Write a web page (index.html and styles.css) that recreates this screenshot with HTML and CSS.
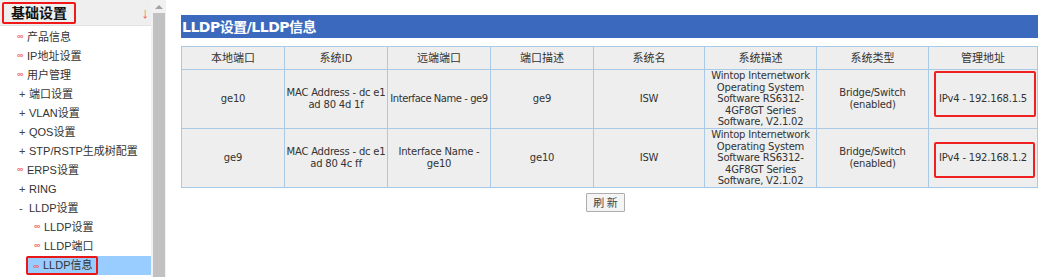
FILE: index.html
```html
<!DOCTYPE html>
<html lang="zh-CN">
  <head>
    <meta charset="UTF-8" />
    <title>LLDP信息</title>
    <link rel="stylesheet" href="styles.css">
  </head>
  <body>
    <div class="side">
      <div class="side-head">
        <span class="head-title">基础设置</span>
        <span class="arrow">↓</span>
      </div>
      <ul class="menu">
        <li class="leaf"><i class="dot">∞</i>产品信息</li>
        <li class="leaf"><i class="dot">∞</i>IP地址设置</li>
        <li class="leaf"><i class="dot">∞</i>用户管理</li>
        <li class="node"><i class="sign">+</i>端口设置</li>
        <li class="node"><i class="sign">+</i>VLAN设置</li>
        <li class="node"><i class="sign">+</i>QOS设置</li>
        <li class="node"><i class="sign">+</i>STP/RSTP生成树配置</li>
        <li class="leaf"><i class="dot">∞</i>ERPS设置</li>
        <li class="node"><i class="sign">+</i>RING</li>
        <li class="node"><i class="sign">-</i>LLDP设置</li>
        <li class="sub"><i class="dot">∞</i>LLDP设置</li>
        <li class="sub"><i class="dot">∞</i>LLDP端口</li>
        <li class="sub active"><span class="marked"><i class="dot">∞</i>LLDP信息</span></li>
      </ul>
    </div>
    <div class="scrollbar">
      <div class="up"></div>
      <div class="thumb"></div>
    </div>

    <div class="main">
      <h1 class="title">LLDP设置/LLDP信息</h1>
      <table class="info">
        <colgroup>
          <col style="width: 103px" />
          <col style="width: 103px" />
          <col style="width: 103px" />
          <col style="width: 103px" />
          <col style="width: 111px" />
          <col style="width: 112px" />
          <col style="width: 112px" />
          <col />
        </colgroup>
        <thead>
          <tr>
            <th>本地端口</th>
            <th>系统ID</th>
            <th>远端端口</th>
            <th>端口描述</th>
            <th>系统名</th>
            <th>系统描述</th>
            <th>系统类型</th>
            <th>管理地址</th>
          </tr>
        </thead>
        <tbody>
          <tr class="row-a">
            <td>ge10</td>
            <td>MAC Address - dc e1 ad 80 4d 1f</td>
            <td class="tight">Interface Name - ge9</td>
            <td>ge9</td>
            <td>ISW</td>
            <td>Wintop Internetwork Operating System Software RS6312-4GF8GT Series Software, V2.1.02</td>
            <td>Bridge/Switch (enabled)</td>
            <td class="addr"><span class="note"></span>IPv4 - 192.168.1.5</td>
          </tr>
          <tr class="row-b">
            <td>ge9</td>
            <td>MAC Address - dc e1 ad 80 4c ff</td>
            <td>Interface Name - ge10</td>
            <td>ge10</td>
            <td>ISW</td>
            <td>Wintop Internetwork Operating System Software RS6312-4GF8GT Series Software, V2.1.02</td>
            <td>Bridge/Switch (enabled)</td>
            <td class="addr"><span class="note"></span>IPv4 - 192.168.1.2</td>
          </tr>
        </tbody>
      </table>
      <div class="actions">
        <button class="btn">刷 新</button>
      </div>
    </div>
  </body>
</html>
```

FILE: styles.css
```css
body {
  margin: 0;
  display: flex;
  align-items: flex-start;
  background-color: #fff;
  color: #333;
  font-family: "Liberation Sans", "Noto Sans CJK SC", sans-serif;
  height: 277px;
  overflow: hidden;
}

/* Left menu */
.side {
  width: 151px;
  flex: none;
}

.side-head {
  height: 25px;
  background-color: #efefef;
  border-bottom: 1px solid #e2e2e2;
  display: flex;
  align-items: center;
  justify-content: space-between;
  padding: 0 2px;
}

.head-title {
  font-size: 14px;
  font-weight: bold;
  color: #111;
  border: 2px solid #f01818;
  border-radius: 2px;
  padding: 0 7px 0 7px;
  height: 18px;
  line-height: 18px;
}

.arrow {
  color: #f06060;
  font-size: 15px;
  margin-right: 0;
}

.menu {
  list-style: none;
  margin: 0;
  padding: 2px 0 0;
}

.menu li {
  height: 19px;
  line-height: 19px;
  font-size: 11px;
  color: #333;
  white-space: nowrap;
}

.menu i {
  font-style: normal;
  display: inline-block;
}

.dot {
  color: #f06a6a;
  font-size: 9px;
  font-weight: bold;
  width: 10px;
  line-height: 17px;
  vertical-align: top;
}

.sign {
  width: 10px;
  color: #444;
}

.leaf {
  padding-left: 17px;
}

.node {
  padding-left: 19px;
}

.sub {
  margin-left: 34px;
}

.sub.active {
  margin-left: 27px;
  background-color: #99ccff;
}

.marked {
  display: inline-block;
  height: 15px;
  line-height: 15px;
  border: 2px solid #e81818;
  border-radius: 2px;
  padding: 0 3px 0 5px;
  margin-left: -1px;
}

/* Fake scrollbar */
.scrollbar {
  width: 15px;
  height: 277px;
  flex: none;
  background-color: #f1f1f1;
  display: flex;
  flex-direction: column;
  align-items: center;
}

.up {
  margin-top: 5px;
  width: 0;
  height: 0;
  border-left: 4px solid transparent;
  border-right: 4px solid transparent;
  border-bottom: 4px solid #a3a3a3;
}

.thumb {
  margin-top: 4px;
  width: 12px;
  flex: 1;
  background-color: #c1c1c1;
}

/* Content */
.main {
  flex: 1;
  padding: 15px 1px 0 15px;
  font-family: "DejaVu Sans", "Noto Sans CJK SC", sans-serif;
}

.title {
  margin: 0;
  height: 23px;
  line-height: 24px;
  background-color: #3b69be;
  color: #fff;
  font-size: 14px;
  font-weight: bold;
  padding-left: 1px;
  letter-spacing: -0.5px;
}

.info {
  margin-top: 8px;
  width: 100%;
  table-layout: fixed;
  border-collapse: collapse;
  border: 1px solid #c8dcee;
  background-color: #eeeeee;
  font-size: 10px;
  line-height: 11.6px;
  letter-spacing: -0.2px;
}

.info th,
.info td {
  border: 1px solid #a9cae6;
  text-align: center;
  padding: 0;
  color: #333;
}

.info td.tight {
  letter-spacing: -0.45px;
  white-space: nowrap;
}

.info th {
  height: 22px;
  font-weight: normal;
  font-family: "Noto Sans CJK SC", sans-serif;
  font-size: 11px;
  letter-spacing: 0;
}

.info td {
  height: 58px;
}

.addr {
  position: relative;
}

/* red annotation boxes */
.note {
  position: absolute;
  left: 5px;
  right: 1px;
  border: 2px solid #f02020;
  border-radius: 2px;
}

.row-a .note {
  top: 1px;
  height: 42px;
}

.row-b .note {
  top: 13px;
  height: 32px;
  right: 2px;
}

.actions {
  text-align: center;
  margin-top: 4px;
  padding-right: 8px;
}

.btn {
  font-family: "Noto Sans CJK SC", sans-serif;
  font-size: 11px;
  height: 19px;
  line-height: 15px;
  padding: 0 6px;
  color: #444;
  background-color: #f4f4f4;
  border: 1px solid #adadad;
  border-radius: 1px;
}
```
